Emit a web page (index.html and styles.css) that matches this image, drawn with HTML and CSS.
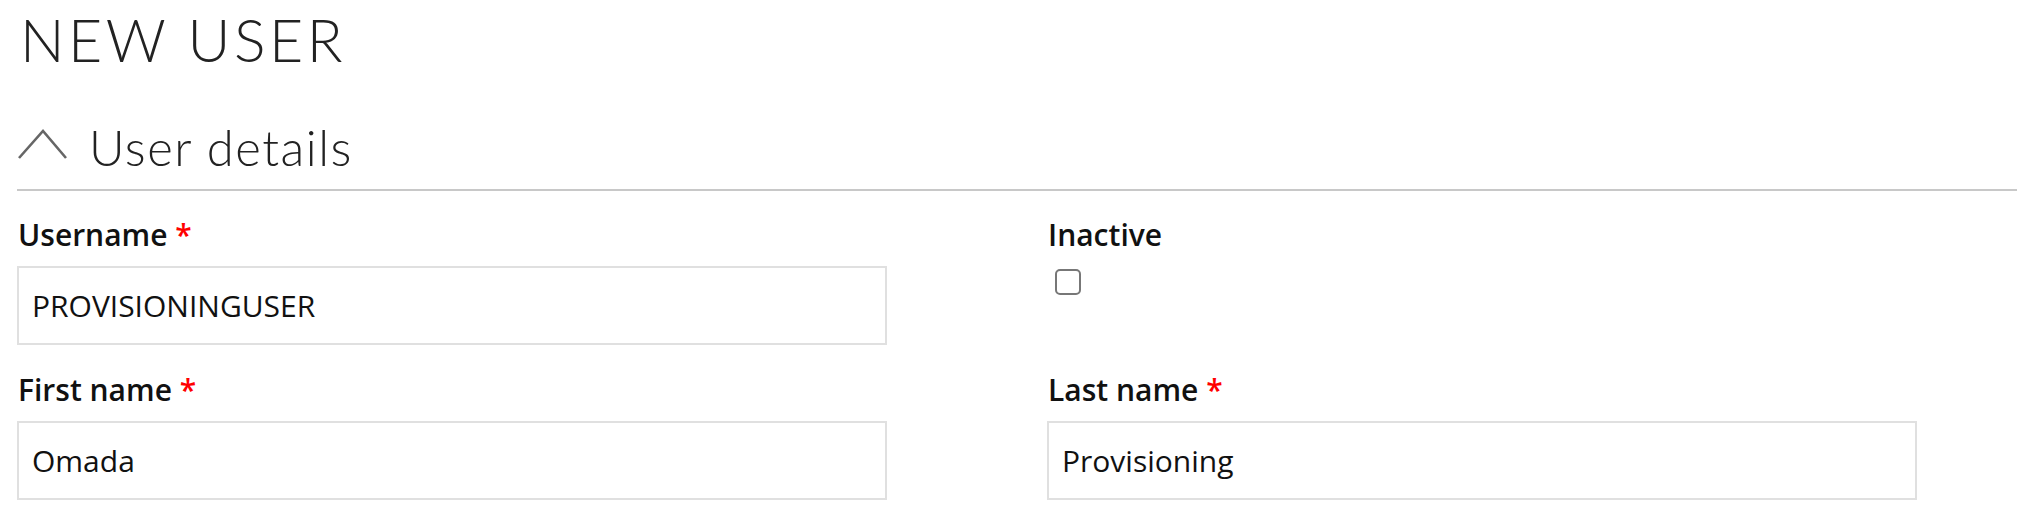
FILE: index.html
```html
<!DOCTYPE html>
<html lang="en">
<head>
<meta charset="utf-8">
<title>New user</title>
<link rel="stylesheet" href="styles.css">
</head>
<body>
<div class="page">
  <h1 class="title">NEW USER</h1>
  <section class="section">
    <div class="section-head">
      <svg class="chevron" width="50" height="32" viewBox="0 0 50 32" aria-hidden="true">
        <polyline points="2,29 26,2 49,29" fill="none" stroke="#666" stroke-width="2.6"/>
      </svg>
      <h2 class="section-title">User details</h2>
    </div>
    <div class="divider"></div>
    <div class="form-grid">
      <div class="field">
        <label class="label">Username <span class="req">*</span></label>
        <input class="text-input" type="text" value="PROVISIONINGUSER">
      </div>
      <div class="field">
        <label class="label">Inactive</label>
        <input class="check" type="checkbox">
      </div>
      <div class="field">
        <label class="label">First name <span class="req">*</span></label>
        <input class="text-input" type="text" value="Omada">
      </div>
      <div class="field">
        <label class="label">Last name <span class="req">*</span></label>
        <input class="text-input" type="text" value="Provisioning">
      </div>
    </div>
  </section>
</div>
</body>
</html>
```
FILE: styles.css
```css
* { box-sizing: border-box; }
html, body { margin: 0; padding: 0; background: #fff; }
body { font-family: "Open Sans", "Noto Sans", sans-serif; color: #111; }
.page { padding: 0 18px 0 17px; }
.title {
  margin: 0;
  padding-top: 5px;
  padding-left: 3px;
  font-family: Lato, "Open Sans", sans-serif;
  font-weight: 300;
  font-size: 59px;
  line-height: 70px;
  letter-spacing: 3.5px;
  color: #222;
}
.section { margin-top: 42px; }
.section-head {
  display: flex;
  align-items: center;
  height: 60px;
}
.chevron { display: block; margin-right: 22px; margin-top: -4px; }
.section-title {
  margin: 0;
  font-family: Lato, "Open Sans", sans-serif;
  font-weight: 300;
  font-size: 49px;
  line-height: 60px;
  color: #222;
  letter-spacing: 1.5px;
}
.divider { height: 2px; background: #c8c8c8; margin-top: 12px; }
.form-grid {
  display: grid;
  grid-template-columns: 970px 970px;
  column-gap: 60px;
  row-gap: 26px;
  margin-top: 25px;
}
.field { display: flex; flex-direction: column; align-items: flex-start; }
.label {
  font-weight: 600;
  font-size: 30px;
  line-height: 38px;
  color: #111;
  margin-left: 1px;
}
.req { color: #f00; }
.text-input {
  margin-top: 12px;
  width: 870px;
  height: 79px;
  border: 2px solid #e0e0e0;
  padding: 0 13px;
  font-family: "Open Sans", "Noto Sans", sans-serif;
  font-size: 30px;
  color: #111;
  background: #fff;
  outline: none;
}
.check {
  appearance: none;
  -webkit-appearance: none;
  margin: 15px 0 0 8px;
  width: 26px;
  height: 26px;
  border: 2px solid #777;
  border-radius: 5px;
  background: #fff;
}
```
